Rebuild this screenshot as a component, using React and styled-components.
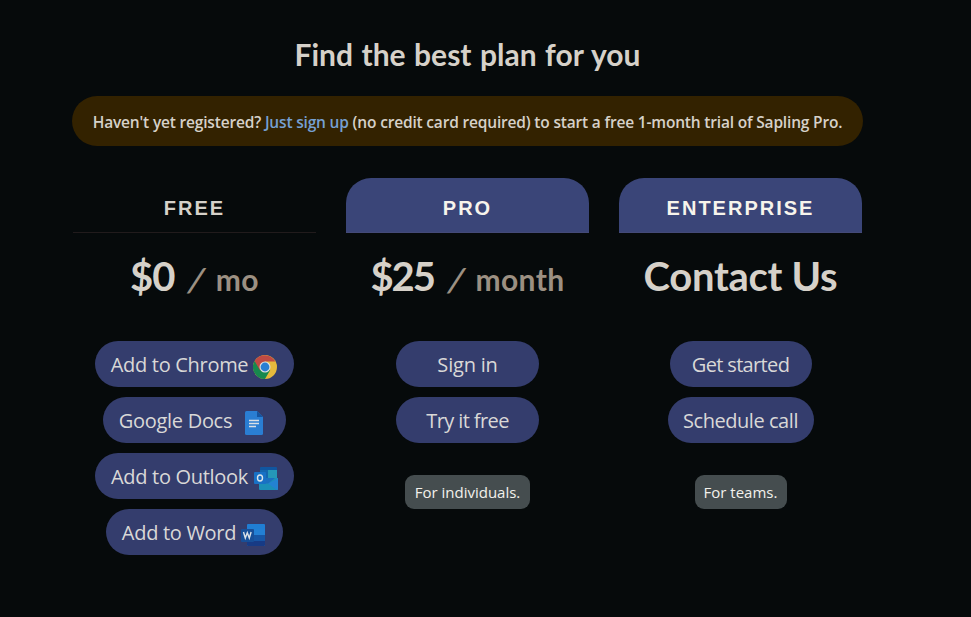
import styled, { createGlobalStyle } from 'styled-components';

const GlobalStyle = createGlobalStyle`
    * {
        box-sizing: border-box;
    }
    body {
        margin: 0;
        background: #060a0b;
        color: #d6d1c9;
        font-family: 'Open Sans', 'Noto Sans', sans-serif;
    }
`;

const Page = styled.main`
    width: 791px;
    margin-left: 72px;
    padding-top: 31px;
`;

const Title = styled.h2`
    margin: 0;
    height: 65px;
    line-height: 46px;
    text-align: center;
    font-family: Lato, sans-serif;
    font-size: 30px;
    font-weight: 700;
    word-spacing: 1.2px;
    white-space: nowrap;
`;

const Notice = styled.div`
    display: flex;
    align-items: center;
    justify-content: center;
    height: 50px;
    padding-top: 1px;
    border-radius: 25px;
    background: #332200;
    font-size: 15.5px;
    font-weight: 600;
    letter-spacing: -0.18px;
    white-space: pre;
`;

const SignUp = styled.a`
    color: #76a0d2;
    cursor: pointer;
`;

const Plans = styled.section`
    display: grid;
    grid-template-columns: repeat(3, 243px);
    gap: 30px;
    margin: 32px 1px 0;
`;

const Plan = styled.article`
    display: flex;
    flex-direction: column;
    align-items: center;
`;

const PlanName = styled.h3`
    width: 100%;
    height: 55px;
    margin: 0;
    padding-top: 1px;
    line-height: 58px;
    border-bottom: 1px solid ${props => props.$filled ? '#444a78' : '#211b1c'};
    border-radius: ${props => props.$filled ? '25px 25px 0 0' : '0'};
    background: ${props => props.$filled ? '#3a4578' : 'transparent'};
    color: ${props => props.$filled ? '#f7f4ec' : '#d6d1c9'};
    text-align: center;
    font-family: 'Liberation Sans', Arial, sans-serif;
    font-size: 20px;
    font-weight: 700;
    letter-spacing: 2px;
`;

const Price = styled.div`
    height: 108px;
    padding-top: 18px;
    line-height: 50px;
    font-family: Lato, sans-serif;
    font-size: 40px;
    font-weight: 700;
    letter-spacing: ${props => props.$spacing};
    white-space: nowrap;
`;

const Period = styled.small`
    color: #9c9082;
    font-size: 30px;
    letter-spacing: 0.4px;
`;

const Slash = styled.span`
    display: inline-block;
    margin: 0 11px 0 16px;
    transform: skewX(-16deg) scaleY(1.08);
`;

const Actions = styled.div`
    display: flex;
    flex-direction: column;
    align-items: center;
    gap: 10px;
`;

const Button = styled.button`
    display: flex;
    align-items: center;
    justify-content: center;
    gap: ${props => props.$gap || '6px'};
    width: ${props => props.$width};
    height: 46px;
    padding: 0 ${props => props.$inset || '0'} 0 0;
    border: none;
    border-radius: 23px;
    background: #343d6d;
    color: #d9d8d7;
    font-family: inherit;
    font-size: 20px;
    letter-spacing: ${props => props.$spacing || '-0.3px'};
    white-space: nowrap;
    cursor: pointer;

    svg {
        flex: none;
        margin-top: 5px;
    }
`;

const Audience = styled.span`
    width: ${props => props.$width};
    height: 34px;
    margin-top: 32px;
    line-height: 34px;
    border-radius: 9px;
    background: #454d4f;
    color: #f3f1ec;
    text-align: center;
    font-size: 15px;
`;

const ChromeIcon = () => (
    <svg width="24" height="24" viewBox="0 0 24 24">
        <circle cx="12" cy="12" r="12" fill="#e5b93c" />
        <path d="M12 12 L1.6 6 A12 12 0 0 0 12 24 L17.2 15Z" fill="#17894e" />
        <path d="M12 12 L6.8 15 L1.6 6 A12 12 0 0 1 22.4 6.6 H12Z" fill="#c04a43" />
        <circle cx="12" cy="12" r="5.5" fill="#e0e0df" />
        <circle cx="12" cy="12" r="4.4" fill="#2a7fd3" />
    </svg>
);

const DocsIcon = () => (
    <svg width="18" height="24" viewBox="0 0 18 24">
        <path d="M1.5 0 H12 L18 6 V22.5 Q18 24 16.5 24 H1.5 Q0 24 0 22.5 V1.5 Q0 0 1.5 0Z" fill="#2a7ed3" />
        <path d="M12 0 L18 6 H12Z" fill="#1554a0" />
        <path d="M4 9.5 H14 M4 12.5 H14 M4 15.5 H11" stroke="#d9dfe5" strokeWidth="1.3" />
    </svg>
);

const OutlookIcon = () => (
    <svg width="24" height="23" viewBox="0 0 24 23">
        <rect x="6" width="17" height="4" rx="1" fill="#1056a0" />
        <rect x="6" y="3" width="8" height="9" fill="#1466ae" />
        <rect x="14" y="3" width="9" height="9" fill="#2597b8" />
        <path d="M5 11 H24 V22 Q24 23 23 23 H6 Q5 23 5 22Z" fill="#1b8fb8" />
        <path d="M14 16.5 L24 11.5 V22 Q24 23 23 23Z" fill="#2382d2" />
        <path d="M6 11 H21 L14 16.5 H6Z" fill="#1a70c0" />
        <rect y="5" width="12" height="12" rx="1" fill="#1871c5" />
        <ellipse cx="6" cy="11" rx="2.5" ry="3" fill="none" stroke="#dce5eb" strokeWidth="1.4" />
    </svg>
);

const WordIcon = () => (
    <svg width="24" height="22" viewBox="0 0 24 22">
        <rect x="6" width="18" height="22" rx="1" fill="#207ed3" />
        <rect x="6" y="5.5" width="18" height="6" fill="#2380d4" />
        <rect x="6" y="11" width="18" height="6" fill="#1756a5" />
        <path d="M6 17 H24 V21 Q24 22 23 22 H7 Q6 22 6 21Z" fill="#173b85" />
        <rect y="5" width="13" height="13" rx="1" fill="#174f98" />
        <path d="M2.5 8 L4.3 14 L6.3 8.7 L8.3 14 L10.1 8" fill="none" stroke="#dce2e8" strokeWidth="1.4" />
    </svg>
);

const plans = [
    {
        name: 'FREE',
        price: '$0',
        spacing: '-1px',
        period: 'mo',
        actions: [
            { label: 'Add to Chrome', width: '198.4px', gap: '5px', inset: '1px', icon: <ChromeIcon /> },
            { label: 'Google Docs', width: '183px', gap: '13px', inset: '7px', icon: <DocsIcon /> },
            { label: 'Add to Outlook', width: '199px', icon: <OutlookIcon /> },
            { label: 'Add to Word', width: '176.4px', gap: '5px', inset: '2px', icon: <WordIcon /> }
        ]
    },
    {
        name: 'PRO',
        filled: true,
        price: '$25',
        spacing: '-2px',
        period: 'month',
        actions: [
            { label: 'Sign in', width: '143px', spacing: '-0.2px' },
            { label: 'Try it free', width: '143px', spacing: '-0.6px' }
        ],
        audience: 'For individuals.',
        audienceWidth: '125px'
    },
    {
        name: 'ENTERPRISE',
        filled: true,
        price: 'Contact Us',
        spacing: '-0.3px',
        actions: [
            { label: 'Get started', width: '142px', spacing: '-0.65px' },
            { label: 'Schedule call', width: '146px', spacing: '-0.45px' }
        ],
        audience: 'For teams.',
        audienceWidth: '92px'
    }
];

const App = () => {
    return (
        <Page>
            <GlobalStyle />
            <Title>Find the best plan for you</Title>
            <Notice>
                Haven't yet registered? <SignUp>Just sign up</SignUp> (no credit card required) to start a free 1-month trial of Sapling Pro.
            </Notice>
            <Plans>
                {plans.map(plan => (
                    <Plan key={plan.name}>
                        <PlanName $filled={plan.filled}>{plan.name}</PlanName>
                        <Price $spacing={plan.spacing}>
                            {plan.price}
                            {plan.period && <Period><Slash>/</Slash>{plan.period}</Period>}
                        </Price>
                        <Actions>
                            {plan.actions.map(el => (
                                <Button key={el.label} $width={el.width} $gap={el.gap} $inset={el.inset} $spacing={el.spacing}>
                                    {el.label}
                                    {el.icon}
                                </Button>
                            ))}
                        </Actions>
                        {plan.audience && <Audience $width={plan.audienceWidth}>{plan.audience}</Audience>}
                    </Plan>
                ))}
            </Plans>
        </Page>
    );
};

export default App;
